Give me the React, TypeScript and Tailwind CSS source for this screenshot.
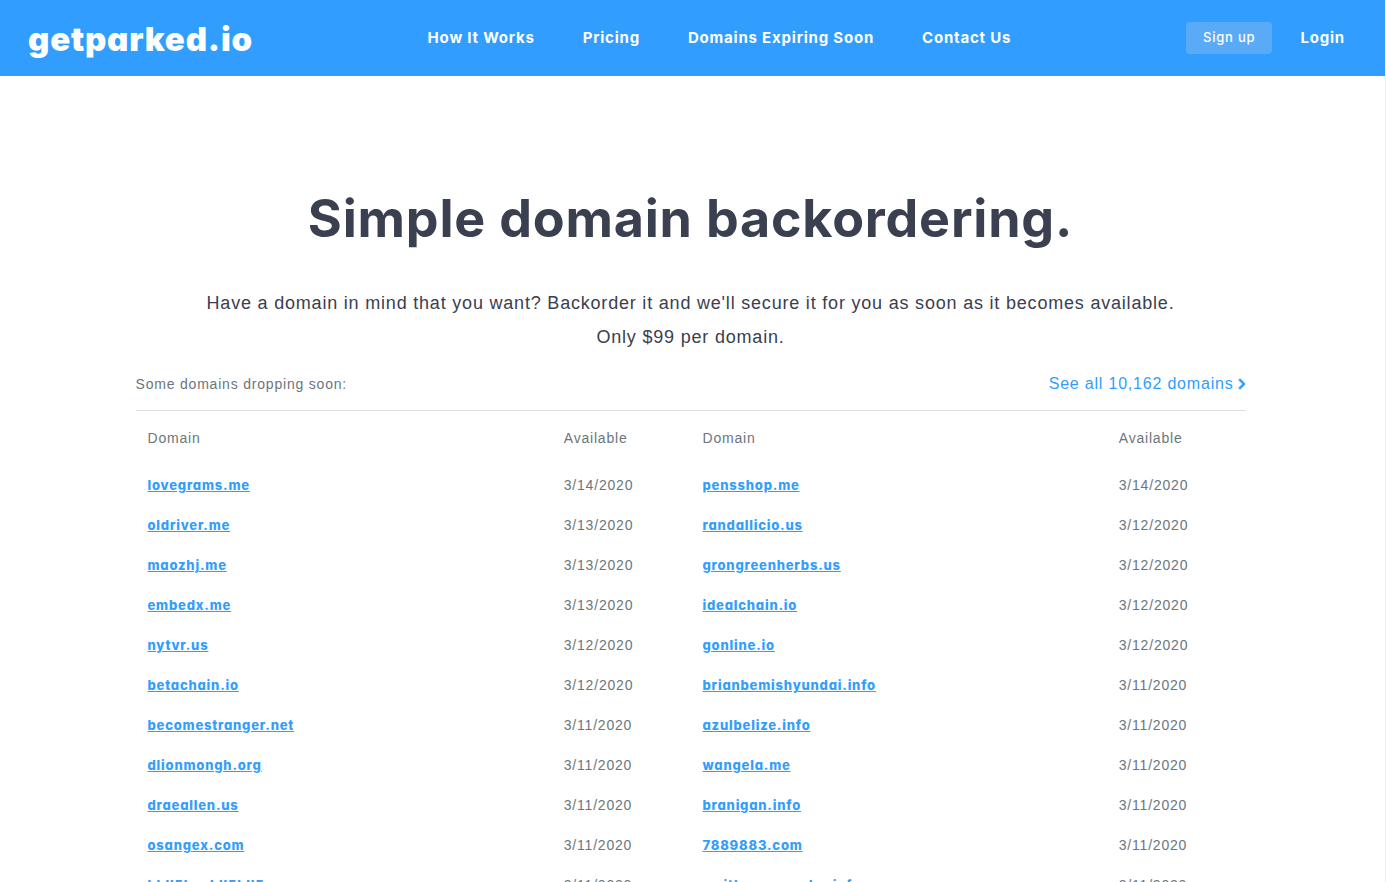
import { FaChevronRight } from "react-icons/fa";

const NAV_LINKS = ["How It Works", "Pricing", "Domains Expiring Soon", "Contact Us"];

type Drop = { name: string; date: string };

const LEFT_DROPS: Drop[] = [
    { name: "lovegrams.me", date: "3/14/2020" },
    { name: "oldriver.me", date: "3/13/2020" },
    { name: "maozhj.me", date: "3/13/2020" },
    { name: "embedx.me", date: "3/13/2020" },
    { name: "nytvr.us", date: "3/12/2020" },
    { name: "betachain.io", date: "3/12/2020" },
    { name: "becomestranger.net", date: "3/11/2020" },
    { name: "dlionmongh.org", date: "3/11/2020" },
    { name: "draeallen.us", date: "3/11/2020" },
    { name: "osangex.com", date: "3/11/2020" },
    { name: "hhll5hcchll5hll5", date: "3/11/2020" }
];

const RIGHT_DROPS: Drop[] = [
    { name: "pensshop.me", date: "3/14/2020" },
    { name: "randallicio.us", date: "3/12/2020" },
    { name: "grongreenherbs.us", date: "3/12/2020" },
    { name: "idealchain.io", date: "3/12/2020" },
    { name: "gonline.io", date: "3/12/2020" },
    { name: "brianbemishyundai.info", date: "3/11/2020" },
    { name: "azulbelize.info", date: "3/11/2020" },
    { name: "wangela.me", date: "3/11/2020" },
    { name: "branigan.info", date: "3/11/2020" },
    { name: "7889883.com", date: "3/11/2020" },
    { name: "smithcommander.info", date: "3/11/2020" }
];

function DropTable({ drops }: { drops: Drop[] }) {
    return (
        <table className="w-full table-fixed text-left text-sm text-[#6c757d]">
            <thead>
                <tr className="h-[54px]">
                    <th className="w-3/4 px-3 font-normal">Domain</th>
                    <th className="w-1/4 px-3 font-normal">Available</th>
                </tr>
            </thead>
            <tbody>
                {drops.map((drop) => (
                    <tr key={drop.name} className="h-10">
                        <td className="px-3">
                            <a
                                href="#"
                                className="font-['Inter',sans-serif] text-[13px] font-extrabold text-[#319dff] underline [font-feature-settings:'cv11']"
                            >
                                {drop.name}
                            </a>
                        </td>
                        <td className="px-3">{drop.date}</td>
                    </tr>
                ))}
            </tbody>
        </table>
    );
}

export default function App() {
    return (
        <div className="h-screen overflow-hidden border-r border-[#f0f0f0] bg-white font-['Liberation_Sans',sans-serif] tracking-wider text-[#3a4050]">
            <header className="flex h-[76px] items-center justify-between bg-[#319dff] pl-7 pr-10 font-['Inter',sans-serif] text-white">
                <a href="#" className="pt-1 text-[33px] font-black [font-feature-settings:'cv11']">
                    getparked.io
                </a>
                <nav className="flex gap-12 text-[15px] font-bold">
                    {NAV_LINKS.map((label) => (
                        <a key={label} href="#">{label}</a>
                    ))}
                </nav>
                <div className="flex items-center gap-7">
                    <button className="h-8 rounded bg-[#5aabf7] px-[17px] text-[13px] font-medium">Sign up</button>
                    <a href="#" className="text-[15px] font-bold">Login</a>
                </div>
            </header>

            <main className="pr-1">
                <div className="mx-auto max-w-[1110px] pt-28">
                    <h1 className="text-center font-['Inter',sans-serif] text-[52px] leading-[62px] font-bold">
                        Simple domain backordering.
                    </h1>
                    <p className="mt-9 text-center text-lg leading-[34px]">
                        Have a domain in mind that you want? Backorder it and we'll secure it for you as soon as it becomes available.
                        <br />
                        Only $99 per domain.
                    </p>

                    <div className="mt-[18px] flex items-center justify-between border-b border-[#dcdfe8] pb-[14px]">
                        <span className="text-sm text-[#6c757d]">Some domains dropping soon:</span>
                        <a href="#" className="flex items-center gap-1 text-[#319dff]">
                            See all 10,162 domains
                            <FaChevronRight className="h-3 w-2" strokeWidth={40} stroke="currentColor" />
                        </a>
                    </div>

                    <div className="grid grid-cols-2">
                        <DropTable drops={LEFT_DROPS} />
                        <DropTable drops={RIGHT_DROPS} />
                    </div>
                </div>
            </main>
        </div>
    );
}
